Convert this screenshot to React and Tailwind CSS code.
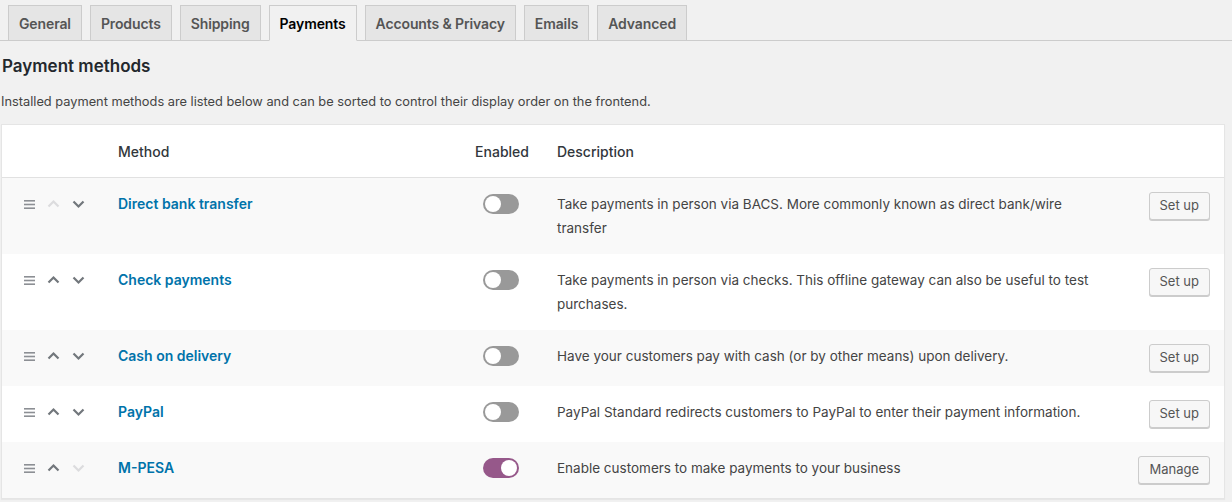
const tabs = ["General", "Products", "Shipping", "Payments", "Accounts & Privacy", "Emails", "Advanced"];

const methods = [
  {
    name: "Direct bank transfer",
    enabled: false,
    desc: "Take payments in person via BACS. More commonly known as direct bank/wire transfer",
    action: "Set up",
    up: false,
    down: true,
  },
  {
    name: "Check payments",
    enabled: false,
    desc: "Take payments in person via checks. This offline gateway can also be useful to test purchases.",
    action: "Set up",
    up: true,
    down: true,
  },
  {
    name: "Cash on delivery",
    enabled: false,
    desc: "Have your customers pay with cash (or by other means) upon delivery.",
    action: "Set up",
    up: true,
    down: true,
  },
  {
    name: "PayPal",
    enabled: false,
    desc: "PayPal Standard redirects customers to PayPal to enter their payment information.",
    action: "Set up",
    up: true,
    down: true,
  },
  {
    name: "M-PESA",
    enabled: true,
    desc: "Enable customers to make payments to your business",
    action: "Manage",
    up: true,
    down: false,
  },
];

function Chevron({ dir, active }) {
  const d = dir === "up" ? "M1.5 7.5 L6.5 2.5 L11.5 7.5" : "M1.5 2.5 L6.5 7.5 L11.5 2.5";
  return (
    <svg width="13" height="10" viewBox="0 0 13 10" className={active ? "text-[#72777c]" : "text-[#dcdcde]"}>
      <path d={d} fill="none" stroke="currentColor" strokeWidth="2.2" />
    </svg>
  );
}

function Handle() {
  return (
    <svg width="11" height="9" viewBox="0 0 11 9" className="text-[#8c8f94]">
      <rect x="0" y="0" width="11" height="1.6" fill="currentColor" />
      <rect x="0" y="3.7" width="11" height="1.6" fill="currentColor" />
      <rect x="0" y="7.4" width="11" height="1.6" fill="currentColor" />
    </svg>
  );
}

function Toggle({ on }) {
  return (
    <span
      className={
        "flex h-[20px] w-[36px] items-center rounded-full px-[2px] " +
        (on ? "justify-end bg-[#96588a]" : "justify-start bg-[#999999]")
      }
    >
      <span className="h-[16px] w-[16px] rounded-full bg-white" />
    </span>
  );
}

export default function App() {
  return (
    <main
      className="min-h-[502px] w-[1232px] overflow-hidden bg-[#f1f1f1] text-[#444]"
      style={{ fontFamily: "Inter, 'Noto Sans', sans-serif" }}
    >
      <nav className="flex items-end border-b border-[#cccccc] pt-[5px]">
        {tabs.map((t) => {
          const active = t === "Payments";
          return (
            <span
              key={t}
              className={
                "ml-[8px] -mb-px flex h-[36px] items-center border border-[#cccccc] px-[10px] text-[14px] font-semibold tracking-[-0.12px] " +
                (active ? "border-b-[#f1f1f1] bg-[#f1f1f1] text-black" : "bg-[#e5e5e5] text-[#555]")
              }
            >
              {t}
            </span>
          );
        })}
      </nav>

      <h2 className="mt-[13px] pl-[2px] text-[17px] font-semibold leading-[24px] text-[#23282d]">Payment methods</h2>
      <p className="mt-[14px] pl-[1px] text-[12.8px] leading-[20px] text-[#444]">
        Installed payment methods are listed below and can be sorted to control their display order on the frontend.
      </p>

      <div className="mt-[12px] ml-px w-[1224px] border border-[#e5e5e5] bg-white shadow-[0_1px_1px_rgba(0,0,0,0.04)]">
        <div className="grid h-[53px] grid-cols-[116px_341px_86px_1fr_auto] items-center border-b border-[#e1e1e1] text-[14px] font-medium text-[#32373c]">
          <span />
          <span>Method</span>
          <span className="text-center">Enabled</span>
          <span className="pl-[12px]">Description</span>
          <span />
        </div>
        {methods.map((m, i) => (
          <div
            key={m.name}
            className={
              "grid grid-cols-[116px_341px_86px_1fr_auto] items-start pt-[14px] pb-[14px] " +
              (i % 2 === 0 ? "bg-[#f9f9f9]" : "bg-white")
            }
          >
            <div className="flex h-[24px] items-center gap-[12px] pl-[22px]">
              <Handle />
              <Chevron dir="up" active={m.up} />
              <Chevron dir="down" active={m.down} />
            </div>
            <div className="text-[14px] font-semibold leading-[24px] text-[#0073aa]">{m.name}</div>
            <div className="flex h-[24px] items-center justify-center pr-[3px]">
              <Toggle on={m.enabled} />
            </div>
            <div className="pl-[12px] pr-[40px] text-[13.5px] leading-[24px] text-[#444]">{m.desc}</div>
            <div className="pr-[14px]">
              <button
                type="button"
                className="h-[28px] rounded-[3px] border border-[#cccccc] bg-[#f7f7f7] px-[10px] text-[13px] text-[#555] shadow-[0_1px_0_#cccccc]"
              >
                {m.action}
              </button>
            </div>
          </div>
        ))}
      </div>
    </main>
  );
}
